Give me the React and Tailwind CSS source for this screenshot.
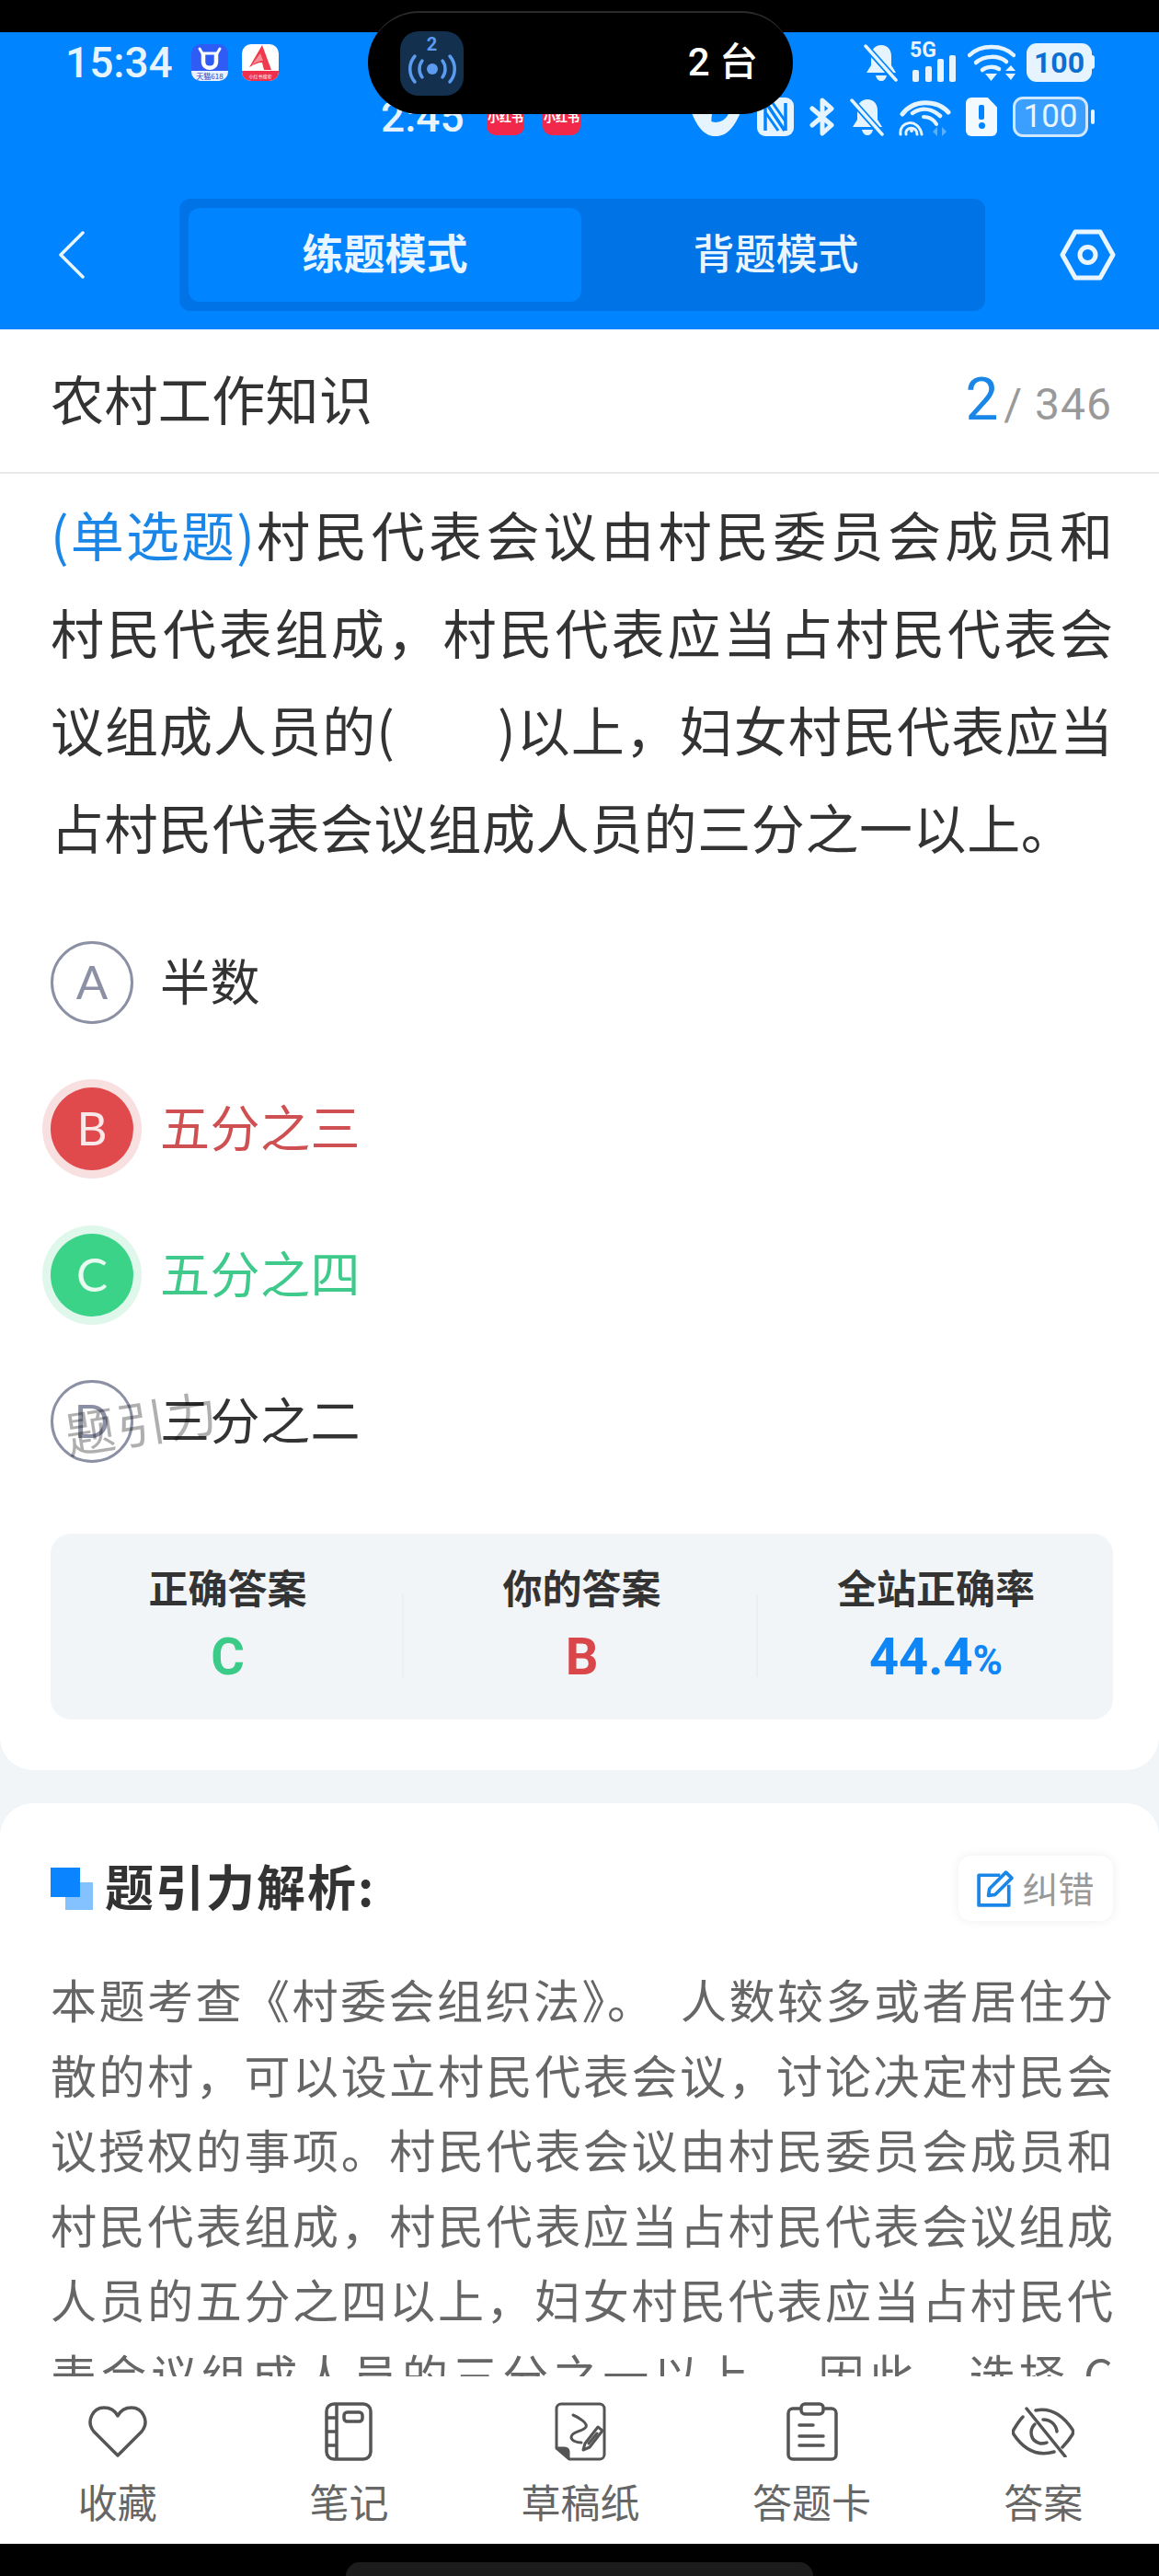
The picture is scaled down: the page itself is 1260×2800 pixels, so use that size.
import React from "react";

const CJK = { fontFamily: '"Noto Sans CJK SC","Noto Sans",sans-serif' };
const ROBOTO = { fontFamily: '"Roboto","Noto Sans CJK SC",sans-serif' };

function BellOff({ w = 38, h = 42 }) {
  return (
    <svg width={w} height={h} viewBox="0 0 38 42" fill="none">
      <path d="M19 2c7 0 11 5 11 12v10l5 8H3l5-8V14C8 7 12 2 19 2z" fill="#e6f4ff" />
      <path d="M13 35h12c-1 4-3 6-6 6s-5-2-6-6z" fill="#e6f4ff" />
      <path d="M1 2l34 38" stroke="#0084ff" strokeWidth="7" />
      <path d="M2 3l33 37" stroke="#e6f4ff" strokeWidth="3.5" strokeLinecap="round" />
    </svg>
  );
}

function Signal() {
  return (
    <div className="relative w-[51px] h-[42px]">
      <span className="absolute left-0 top-[-4px] text-[23px] leading-[24px] font-bold text-[#e6f4ff]" style={ROBOTO}>5G</span>
      <svg className="absolute left-0 top-0" width="51" height="42" viewBox="0 0 51 42">
        <rect x="3" y="29" width="7" height="13" rx="2" fill="#e6f4ff" />
        <rect x="17" y="25" width="7" height="17" rx="2" fill="#e6f4ff" />
        <rect x="30" y="17" width="7" height="25" rx="2" fill="#e6f4ff" />
        <rect x="43" y="13" width="7" height="29" rx="2" fill="#e6f4ff" />
      </svg>
    </div>
  );
}

function Wifi() {
  return (
    <svg width="52" height="42" viewBox="0 0 52 42" fill="none" stroke="#e6f4ff" strokeWidth="4.5" strokeLinecap="round">
      <path d="M2 13C14 1 38 1 50 13" />
      <path d="M9 21c9-8 25-8 33-1" />
      <path d="M16 29c5-4 13-4 18-1" />
      <path d="M19 33h13l-6.500 8z" fill="#e6f4ff" stroke="none" />
      <path d="M41 30l6-6 5 6zM41 33h11l-5 7z" fill="#e6f4ff" stroke="none" />
    </svg>
  );
}

function Wifi2() {
  return (
    <svg width="57" height="42" viewBox="0 0 57 42" fill="none" stroke="#e6f4ff" strokeLinecap="round">
      <path d="M4 18C16 2 41 2 54 16" strokeWidth="5" />
      <path d="M15 17c9-6 20-6 30 3" strokeWidth="4.5" />
      <path d="M27 21c6 0 11 3 14 8" strokeWidth="4" />
      <path d="M2 40c-2-15 20-18 23 0" strokeWidth="3" />
      <path d="M8 40c-2-8 12-10 12 0" strokeWidth="3" />
      <circle cx="14" cy="36" r="2" fill="#e6f4ff" stroke="none" />
      <path d="M42 32l-5 5 5 5zM47 32l5 5-5 5z" fill="#5aafff" stroke="none" />
    </svg>
  );
}

function Nfc() {
  return (
    <svg width="40" height="42" viewBox="0 0 40 42">
      <rect x="0" y="0" width="40" height="42" rx="9" fill="#e6f4ff" />
      <path d="M9 6v30M31 6v30M10 6l20 30" stroke="#0084ff" strokeWidth="3.5" fill="none" />
      <path d="M17 6l14 20M9 16l14 20" stroke="#0084ff" strokeWidth="3" fill="none" />
    </svg>
  );
}

function Bt() {
  return (
    <svg width="27" height="42" viewBox="0 0 27 42" fill="none" stroke="#e6f4ff" strokeWidth="5" strokeLinecap="round" strokeLinejoin="round">
      <path d="M3 12l21 18-10 9V3l10 9L3 30" />
    </svg>
  );
}

function Sim() {
  return (
    <div className="w-[34px] h-[42px] bg-[#f2faff] rounded-[6px] flex flex-col items-center justify-center gap-[3px]" style={{ clipPath: "polygon(0 0,70% 0,100% 25%,100% 100%,0 100%)" }}>
      <div className="w-[6px] h-[16px] bg-[#0084ff] rounded-[2px]" />
      <div className="w-[7px] h-[7px] bg-[#0084ff] rounded-full" />
    </div>
  );
}

function EyeTop() {
  return (
    <svg width="57" height="42" viewBox="0 0 57 42">
      <path d="M1 14C12 -6 45 -6 56 14C47 36 38 42 28 42C18 42 9 36 1 14z" fill="#e6f4ff" />
      <circle cx="28" cy="12" r="15" fill="#0084ff" />
      <path d="M8 14c4 14 12 22 17 24-2-8-2-14-1-20z" fill="#e6f4ff" />
    </svg>
  );
}

function TmallIcon() {
  return (
    <div className="relative w-[40px] h-[40px] rounded-[10px] bg-[#2f5cf5] overflow-hidden">
      <svg className="absolute left-0 top-0" width="40" height="30" viewBox="0 0 40 30" fill="none">
        <path d="M9 5l3 5h16l3-5" stroke="#fff" strokeWidth="3" strokeLinecap="round" />
        <path d="M13 10v9c0 9 14 9 14 0v-9" stroke="#fff" strokeWidth="4.500" />
      </svg>
      <div className="absolute left-0 bottom-0 w-full h-[11px] bg-[#eaf1ff] text-center text-[#2743c2] text-[8px] leading-[11px] whitespace-nowrap" style={CJK}>天猫618</div>
    </div>
  );
}

function RedAIcon() {
  return (
    <div className="relative w-[40px] h-[40px] rounded-[10px] bg-white overflow-hidden">
      <svg className="absolute left-0 top-0" width="40" height="30" viewBox="0 0 40 30">
        <path d="M22 1L8 25c5-3 9-5 14-5l2 8h8z" fill="#ef3a4e" />
        <path d="M20 10l3 8c-5 0-9 2-14 7z" fill="#f78d96" />
      </svg>
      <div className="absolute left-0 bottom-0 w-full h-[11px] bg-[#f0304a] text-center text-white text-[5px] leading-[11px] whitespace-nowrap" style={CJK}>小红书搜索</div>
    </div>
  );
}

function RedTag() {
  return (
    <div className="w-[41px] h-[40px] rounded-b-[10px] bg-[#f2284a] pt-[13px] text-center text-white text-[13px] leading-[14px] font-bold whitespace-nowrap overflow-hidden" style={CJK}>小红书</div>
  );
}

function Hex() {
  return (
    <svg width="61" height="56" viewBox="0 0 61 56" fill="none" stroke="#eaf6ff" strokeWidth="5" strokeLinejoin="round">
      <path d="M17 3h27l14 25-14 25H17L3 28z" />
      <circle cx="30.5" cy="28" r="8.500" />
    </svg>
  );
}

function Heart() {
  return (
    <svg width="64" height="56" viewBox="0 0 64 56" fill="none" stroke="#555" strokeWidth="3.5" strokeLinejoin="round">
      <path d="M32 54L6 28C-3 17 5 2 17 2c7 0 12 3 15 9 3-6 8-9 15-9 12 0 20 15 11 26z" />
    </svg>
  );
}

function Notebook() {
  return (
    <svg width="52" height="64" viewBox="0 0 52 64" fill="none" stroke="#555" strokeWidth="3.5" strokeLinejoin="round">
      <rect x="2" y="2" width="48" height="60" rx="8" />
      <path d="M13 2v60M2 17h11M2 32h11M2 47h11" />
      <rect x="21" y="11" width="20" height="10" rx="3.5" />
    </svg>
  );
}

function Draft() {
  return (
    <svg width="56" height="64" viewBox="0 0 56 64" fill="none" stroke="#555" strokeWidth="3" strokeLinejoin="round" strokeLinecap="round">
      <path d="M7 2h42a5 5 0 0 1 5 5v50a5 5 0 0 1-5 5H16L2 50V7a5 5 0 0 1 5-5z" />
      <path d="M3 50h8a4 4 0 0 1 4 4v7z" fill="#555" />
      <path d="M20 14c7 3 16 9 14 13-3 5-16 5-16 11 0 4 6 6 11 6" />
      <path d="M33 45l14-18 5 4-14 18-7 3z" fill="#fff" />
      <path d="M37 45l9-11" />
    </svg>
  );
}

function Clip() {
  return (
    <svg width="56" height="64" viewBox="0 0 56 64" fill="none" stroke="#555" strokeWidth="3.5" strokeLinecap="round" strokeLinejoin="round">
      <path d="M14 7H7a5 5 0 0 0-5 5v45a5 5 0 0 0 5 5h42a5 5 0 0 0 5-5V12a5 5 0 0 0-5-5h-7" />
      <rect x="16" y="2" width="24" height="11" rx="4" />
      <path d="M14 25h15M14 37h26M14 47h26" />
    </svg>
  );
}

function EyeOff() {
  return (
    <svg width="68" height="56" viewBox="0 0 68 56" fill="none" stroke="#555" strokeWidth="3.5" strokeLinecap="round" strokeLinejoin="round">
      <path d="M16 3l42 52" />
      <path d="M26 5c15-3 28 3 40 21 1 2 1 3 0 5-3 5-7 10-11 14" />
      <path d="M12 12C8 16 5 21 2 26c-1 2-1 3 0 5 12 18 27 24 44 19" />
      <path d="M25 20c-6 6-6 18 6 21 2 0 5 0 7-1" />
      <path d="M34 15c8 0 14 5 15 13" />
    </svg>
  );
}

function NavItem({ icon, label }) {
  return (
    <div className="flex flex-col items-center">
      <div className="h-[64px] flex items-center justify-center">{icon}</div>
      <div className="mt-[18px] text-[43px] leading-[50px] text-[#666]" style={CJK}>{label}</div>
    </div>
  );
}

function Option({ letter, text, state }) {
  const circle =
    state === "wrong"
      ? "bg-[#e04a4d] text-[#fbe9e9] ring-[9px] ring-[#f8e0e1]"
      : state === "right"
      ? "bg-[#3ad388] text-[#e8fbf1] ring-[9px] ring-[#e0f7ec]"
      : "border-[3px] border-[#8c90a4] text-[#8c90a4]";
  const color = state === "wrong" ? "text-[#cf5052]" : state === "right" ? "text-[#3fca8c]" : "text-[#333]";
  return (
    <div className="h-[159px] flex items-center">
      <div className={`w-[90px] h-[90px] rounded-full flex items-center justify-center text-[51px] ${circle}`} style={{ fontFamily: '"Lato",sans-serif' }}>{letter}</div>
      <div className={`ml-[29px] pb-[7px] text-[54px] tracking-[0.5px] ${color}`} style={CJK}>{text}</div>
    </div>
  );
}

function Stat({ label, children, divider }) {
  return (
    <div className="relative flex-1 flex flex-col items-center pt-[28px]">
      {divider && <div className="absolute left-[-3px] top-[66px] w-[2px] h-[90px] bg-[#ebeef2]" />}
      <div className="text-[43px] leading-[58px] font-bold text-[#333]" style={CJK}>{label}</div>
      <div className="mt-[20px] text-[56px] leading-[56px] font-bold" style={ROBOTO}>{children}</div>
    </div>
  );
}

function JLine({ children }) {
  return <div className="w-[1155px] text-justify [text-align-last:justify] whitespace-normal">{children}</div>;
}

export default function App() {
  return (
    <div className="relative w-[1260px] h-[2800px] overflow-hidden bg-[#f2f5f8] flex flex-col">
      {/* top */}
      <div className="h-[35px] bg-black shrink-0" />
      <div className="h-[323px] bg-[#0084ff] shrink-0 flex flex-col">
        <div className="h-[42px] mt-[12px] flex items-center pl-[71px] pr-[70px]">
          <span className="text-[46px] leading-[42px] font-medium text-[#e6f4ff] w-[137px]" style={ROBOTO}>15:34</span>
          <TmallIcon />
          <div className="ml-[15px]"><RedAIcon /></div>
          <div className="flex-1" />
          <BellOff />
          <div className="ml-[12px]"><Signal /></div>
          <div className="ml-[12px]"><Wifi /></div>
          <div className="ml-[12px] relative w-[74px] h-[42px]">
            <div className="w-[71px] h-[42px] rounded-[11px] bg-[#e6f4ff] flex items-center justify-center text-[#0a6fd0] text-[32px] font-bold" style={ROBOTO}>100</div>
            <div className="absolute right-0 top-[13px] w-[4px] h-[15px] rounded-r-[3px] bg-[#e6f4ff]" />
          </div>
        </div>
        <div className="h-[42px] mt-[17px] flex items-center pl-[414px] pr-[70px]">
          <span className="text-[46px] leading-[42px] font-medium text-[#e6f4ff] w-[115px]" style={ROBOTO}>2:45</span>
          <RedTag />
          <div className="ml-[20px]"><RedTag /></div>
          <div className="flex-1" />
          <EyeTop />
          <div className="ml-[16px]"><Nfc /></div>
          <div className="ml-[17px]"><Bt /></div>
          <div className="ml-[17px]"><BellOff /></div>
          <div className="ml-[15px]"><Wifi2 /></div>
          <div className="ml-[16px]"><Sim /></div>
          <div className="ml-[17px] relative w-[89px] h-[44px]">
            <div className="w-[82px] h-[44px] rounded-[11px] border-[3px] border-[#cfe8ff] bg-[#3b9fff] flex items-center justify-center text-[#eaf6ff] text-[35px]" style={ROBOTO}>100</div>
            <div className="absolute right-0 top-[14px] w-[4px] h-[16px] rounded-[3px] bg-[#e6f4ff]" />
          </div>
        </div>
        <div className="mt-[68px] flex items-center pl-[64px] pr-[47px]">
          <svg width="28" height="52" viewBox="0 0 28 52" fill="none" stroke="#eaf6ff" strokeWidth="3.5" strokeLinecap="round" strokeLinejoin="round">
            <path d="M26 2L2 26l24 24" />
          </svg>
          <div className="ml-[103px] w-[876px] h-[122px] rounded-[12px] bg-[#0073e6] flex p-[10px]">
            <div className="w-[427px] rounded-[12px] bg-[#0084ff] flex items-center justify-center pb-[7px] text-[45px] font-bold text-[#eaf6ff]" style={CJK}>练题模式</div>
            <div className="flex-1 flex items-center justify-center pb-[7px] pr-[6px] text-[45px] text-[#eaf6ff] font-medium" style={CJK}>背题模式</div>
          </div>
          <div className="flex-1" />
          <Hex />
        </div>
      </div>

      {/* title row */}
      <div className="h-[157px] shrink-0 bg-white border-b-2 border-[#e6e8ea] flex items-center justify-between pl-[55px] pr-[51px]">
        <div className="pb-[7px] text-[58px] tracking-[0.4px] text-[#333]" style={CJK}>农村工作知识</div>
        <div className="flex items-baseline pb-[2px]" style={ROBOTO}>
          <span className="text-[64px] text-[#1a87e8]">2</span>
          <span className="ml-[6px] text-[48px] text-[#999] tracking-[1px]">/ 346</span>
        </div>
      </div>

      {/* question card */}
      <div className="h-[1409px] shrink-0 bg-white rounded-b-[36px] pt-[12px] px-[55px]">
        <div className="text-[58px] leading-[106px] text-[#333]" style={CJK}>
          <JLine><span className="text-[#1a87e8] tracking-[-2.2px]">(单选题)</span>村民代表会议由村民委员会成员和</JLine>
          <JLine>村民代表组成，村民代表应当占村民代表会</JLine>
          <JLine>议组成人员的(&nbsp;&nbsp;&nbsp;&nbsp;&nbsp;&nbsp;&nbsp;&nbsp;)以上，妇女村民代表应当</JLine>
          <div className="whitespace-nowrap tracking-[0.6px]">占村民代表会议组成人员的三分之一以上。</div>
        </div>
        <div className="mt-[37px] flex flex-col">
          <Option letter="A" text="半数" />
          <Option letter="B" text="五分之三" state="wrong" />
          <Option letter="C" text="五分之四" state="right" />
          <Option letter="D" text="三分之二" />
        </div>
        <div className="mt-[43px] w-[1155px] h-[202px] rounded-[22px] bg-[#f2f5f8] flex">
          <Stat label="正确答案"><span className="text-[#3bcb88]">C</span></Stat>
          <Stat label="你的答案" divider><span className="text-[#d9474b]">B</span></Stat>
          <Stat label="全站正确率" divider>
            <span className="text-[#0f86f5]">44.4<span className="text-[44px]">%</span></span>
          </Stat>
        </div>
      </div>

      {/* explanation card */}
      <div className="mt-[36px] flex-1 min-h-0 overflow-hidden bg-white rounded-t-[36px] pt-[57px] pl-[55px] pr-[50px]">
        <div className="flex items-center justify-between h-[71px]">
          <div className="flex items-center">
            <div className="relative w-[46px] h-[46px]">
              <div className="absolute right-0 bottom-0 w-[30px] h-[30px] bg-[#84c2ff]" />
              <div className="absolute left-0 top-0 w-[32px] h-[32px] bg-[#0a84ff]" />
            </div>
            <div className="ml-[13px] pb-[6px] text-[53px] font-bold text-[#333] tracking-[2px]" style={CJK}>题引力解析:</div>
          </div>
          <div className="w-[168px] h-[71px] rounded-[14px] bg-white shadow-[0_0_12px_rgba(0,0,0,0.07)] flex items-center justify-center">
            <svg width="40" height="40" viewBox="0 0 38 38" fill="none" stroke="#1a87e8" strokeWidth="3.5" strokeLinejoin="round">
              <path d="M24 5H2v31h31V15" />
              <path d="M13 19L30 2l6 6-17 17-7 1z" />
            </svg>
            <span className="ml-[9px] pb-[3px] text-[39px] text-[#999]" style={CJK}>纠错</span>
          </div>
        </div>
        <div className="mt-[44px] text-[50px] leading-[81.5px] text-[#666]" style={CJK}>
          <JLine>本题考查《村委会组织法》。&nbsp;&nbsp;人数较多或者居住分</JLine>
          <JLine>散的村，可以设立村民代表会议，讨论决定村民会</JLine>
          <JLine>议授权的事项。村民代表会议由村民委员会成员和</JLine>
          <JLine>村民代表组成，村民代表应当占村民代表会议组成</JLine>
          <JLine>人员的五分之四以上，妇女村民代表应当占村民代</JLine>
          <JLine>表会议组成人员的三分之一以上。 因此，选择 C</JLine>
        </div>
      </div>

      {/* bottom nav */}
      <div className="h-[182px] shrink-0 bg-white grid grid-cols-5 pt-[28px] pl-[2px]">
        <NavItem icon={<Heart />} label="收藏" />
        <NavItem icon={<Notebook />} label="笔记" />
        <NavItem icon={<Draft />} label="草稿纸" />
        <NavItem icon={<Clip />} label="答题卡" />
        <NavItem icon={<EyeOff />} label="答案" />
      </div>
      <div className="h-[35px] shrink-0 bg-black flex justify-center pt-[20px]">
        <div className="w-[508px] h-[15px] rounded-t-full bg-[#1c1c1c]" />
      </div>

      {/* dynamic island */}
      <div className="absolute left-[400px] top-[12px] w-[462px] h-[112px] rounded-full bg-black border-t-2 border-[#2a2a2a] flex items-center pl-[35px] pr-[38px] justify-between">
        <div className="w-[69px] h-[70px] rounded-[20px] bg-[#14304f] flex flex-col items-center pt-[4px]">
          <span className="text-[20px] leading-[20px] font-bold text-[#5b9cf0]" style={ROBOTO}>2</span>
          <svg width="52" height="34" viewBox="0 0 52 34" fill="none" stroke="#5b9cf0" strokeWidth="3.5" strokeLinecap="round">
            <circle cx="26" cy="17" r="6" fill="#5b9cf0" stroke="none" />
            <path d="M15 8c-4 5-4 13 0 18M37 8c4 5 4 13 0 18" />
            <path d="M7 3c-7 8-7 20 0 28M45 3c7 8 7 20 0 28" />
          </svg>
        </div>
        <span className="pb-[3px] text-[42px] text-white font-medium" style={ROBOTO}>2 台</span>
      </div>

      {/* watermark */}
      <div className="absolute left-[70px] top-[1510px] text-[54px] leading-[70px] tracking-[2px] text-[#00000050] -rotate-[9deg] whitespace-nowrap" style={CJK}>题引力</div>
    </div>
  );
}
